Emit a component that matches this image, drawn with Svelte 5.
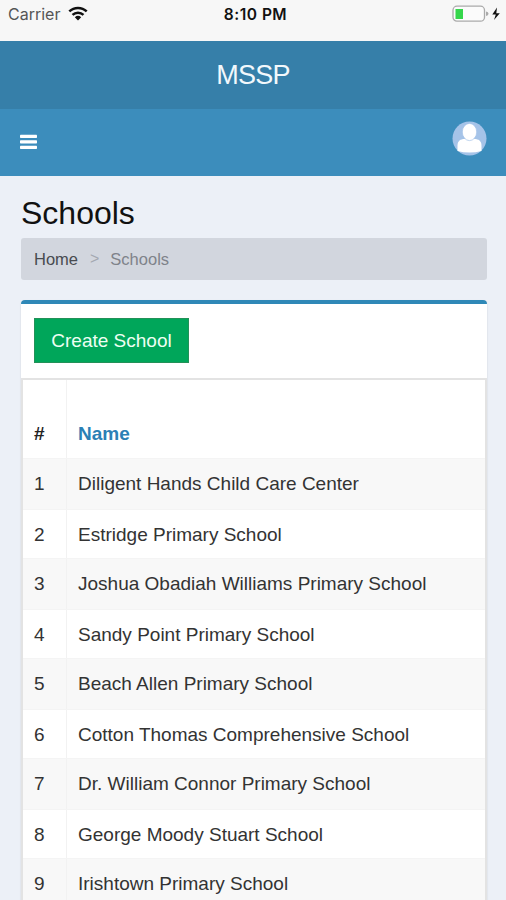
<script>
  const schools = [
    'Diligent Hands Child Care Center',
    'Estridge Primary School',
    'Joshua Obadiah Williams Primary School',
    'Sandy Point Primary School',
    'Beach Allen Primary School',
    'Cotton Thomas Comprehensive School',
    'Dr. William Connor Primary School',
    'George Moody Stuart School',
    'Irishtown Primary School'
  ];
</script>

<div class="screen">
  <div class="status">
    <div class="carrier">
      <span>Carrier</span>
      <svg width="20" height="15" viewBox="0 0 20 15" fill="none" stroke="#111" stroke-width="2.5">
        <path d="M1.3 5.4C6.2.7 13.8.7 18.7 5.4" />
        <path d="M4.5 8.9C7.6 6 12.4 6 15.5 8.9" />
        <path d="M6.8 11.2Q10 8.4 13.2 11.2L10 14.4Z" fill="#111" stroke="none" />
      </svg>
    </div>
    <span class="time">8:10 PM</span>
    <svg class="battery" width="54" height="18" viewBox="0 0 54 18">
      <rect x="1" y="1.2" width="31.5" height="15" rx="4" fill="#fbfbfb" stroke="#aaa" stroke-width="1.3" />
      <rect x="3.5" y="4" width="7.5" height="10" fill="#35d64b" />
      <path d="M34 6.5Q36.5 7 36.5 8.8T34 11Z" fill="#aaa" />
      <path d="M45 2.6L40.3 9.6H43.8L42 15L47.8 8.2H44.3Z" fill="#111" />
    </svg>
  </div>
  <header class="brand"><span>MSSP</span></header>
  <nav>
    <svg width="17" height="16" viewBox="0 0 17 16" fill="#fff">
      <rect y="0.7" width="17" height="3.3" rx=".7" />
      <rect y="6.2" width="17" height="3.3" rx=".7" />
      <rect y="11.7" width="17" height="3.3" rx=".7" />
    </svg>
    <svg class="avatar" width="35" height="35" viewBox="0 0 35 35">
      <circle cx="17.5" cy="17.5" r="17" fill="#a5c3e8" />
      <path d="M5.5 30V24.5C5.5 20 8.5 18 12.5 18H22.5C26.5 18 29.5 20 29.5 24.5V30Q24 31.5 17.5 31.5T5.5 30Z" fill="#fff" />
      <ellipse cx="17.5" cy="11" rx="7.2" ry="8.6" fill="#fff" stroke="#a5c3e8" stroke-width=".7" />
    </svg>
  </nav>
  <main>
    <h1>Schools</h1>
    <div class="crumbs"><span class="home">Home</span><span class="sep">&gt;</span><span class="here">Schools</span></div>
    <section class="box">
      <div class="tools"><button>Create School</button></div>
      <div class="table">
        <div class="row head"><div class="num">#</div><div class="name">Name</div></div>
        {#each schools as school, i}
          <div class="row" class:odd={i % 2 === 0}>
            <div class="num">{i + 1}</div>
            <div class="name">{school}</div>
          </div>
        {/each}
      </div>
    </section>
  </main>
</div>

<style>
  .screen {
    width: 506px; height: 900px; overflow: hidden; background: #ecf0f7;
    display: flex; flex-direction: column; box-sizing: border-box;
    font-family: "Liberation Sans", Arial, sans-serif; color: #333; white-space: nowrap;
  }
  .status {
    height: 41px; flex: none; background: #f7f7f7; display: grid;
    grid-template-columns: 1fr auto 1fr; align-items: start; color: #111;
    padding: 5px 0 0 8px; box-sizing: border-box;
  }
  .carrier { display: flex; gap: 8px; font: 16px/20px Inter, sans-serif; color: #555; margin-top: -1px; }
  .carrier svg { margin-top: 2px; }
  .time { font: 600 15.5px/20px Inter, sans-serif; letter-spacing: .5px; margin-right: 3px; }
  .battery { justify-self: end; }
  .brand {
    height: 68px; flex: none; background: #367fa9; color: #f2f8fc; text-align: center;
    font-size: 27px; line-height: 68px; letter-spacing: -.7px;
  }
  nav {
    height: 67px; flex: none; background: #3c8dbc; display: flex; justify-content: space-between;
    padding: 12px 19px 0 20px; box-sizing: border-box;
  }
  nav svg:first-child { margin-top: 13px; }
  main { padding: 0 19px 0 21px; }
  h1 { font-size: 32px; font-weight: 400; line-height: 36px; margin: 19px 0 0; height: 43px; color: #111; }
  .crumbs {
    height: 42px; background: #d2d6de; border-radius: 3px; padding-left: 13px;
    display: flex; align-items: center; font-size: 16.5px; line-height: 42px; box-sizing: border-box;
  }
  .home { color: #484b50; }
  .sep { color: #a4a8b1; margin: 0 11px 0 12px; font-size: 16px; }
  .here { color: #7f838a; }
  .box {
    margin-top: 20px; border-top: 4px solid #2f88b7; border-radius: 4px 4px 0 0;
    background: #fff; box-shadow: 0 1px 2px #0002;
  }
  .tools { height: 74px; padding: 14px 13px 0; box-sizing: border-box; }
  button {
    display: block; width: 155px; height: 45px; padding: 0; background: #00a65a;
    border: 1px solid #239158; color: #eefff3; font: 19px/43px "Liberation Sans", Arial, sans-serif;
  }
  .table { border: 2px solid #e3e3e3; border-bottom: 0; }
  .row { height: 49px; display: flex; box-sizing: border-box; border-top: 1px solid #f4f4f4; font-size: 19px; line-height: 50px; }
  .row.odd { height: 51px; background: #f8f8f8; }
  .row.head { height: 78px; border-top: 0; font-weight: 700; color: #222; line-height: 108px; }
  .num { width: 44px; padding-left: 11px; box-sizing: border-box; border-right: 1px solid #f2f2f2; overflow: hidden; }
  .name { padding-left: 11px; }
  .head .name { color: #2b80b5; }
</style>
